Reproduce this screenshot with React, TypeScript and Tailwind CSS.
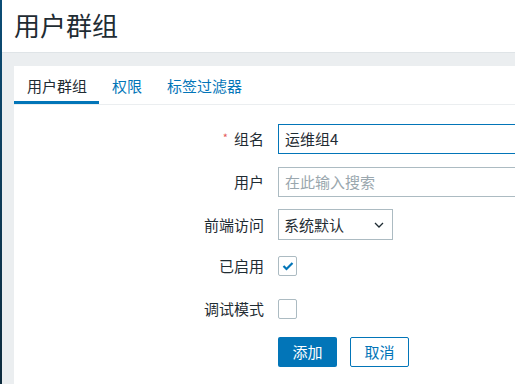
export default function App() {
  const font = { fontFamily: '"Noto Sans CJK SC", "Liberation Sans", sans-serif' }

  return (
    <div
      className="flex h-[384px] w-[515px] overflow-hidden bg-[#ebeef0] text-[#1f2c33]"
      style={font}
    >
      <div className="w-[2px] shrink-0 bg-gradient-to-b from-[#0b4d76] to-[#0d2b3d]" />

      <div className="flex min-w-0 flex-1 flex-col">
        <header className="flex h-[53px] shrink-0 items-center border-b border-[#dfe4e7] bg-white pl-[12px] pb-[2px]">
          <h1 className="text-[26px] leading-none text-[#1f2c33]">用户群组</h1>
        </header>

        <div className="flex-1 pt-[13px] pl-[12px]">
          <div className="h-full w-[600px] bg-white">
            <nav className="flex h-[39px] border-b border-[#ebeef0] text-[15px] leading-[20px]">
              <div className="relative pl-[13px] pr-[12px] pt-[10px] text-[#1f2c33]">
                用户群组
                <span className="absolute bottom-0 left-0 right-0 h-[3px] bg-[#0275b8]" />
              </div>
              <div className="pl-[13px] pr-[12px] pt-[10px] text-[#0275b8]">权限</div>
              <div className="pl-[13px] pr-[12px] pt-[10px] text-[#0275b8]">标签过滤器</div>
            </nav>

            <form className="flex flex-col pt-[19px] text-[15px] leading-[20px]">
              <div className="flex items-center">
                <label className="w-[251px] pr-[1px] text-right">
                  <span className="relative -top-[3px] mr-[6px] text-[11px] text-[#e45959]">*</span>
                  组名
                </label>
                <div className="ml-[13px] flex h-[30px] w-[300px] items-center border border-[#0275b8] pl-[6px]">
                  运维组4
                </div>
              </div>

              <div className="mt-[13px] flex items-center">
                <label className="w-[251px] pr-[1px] text-right">用户</label>
                <div className="ml-[13px] flex h-[30px] w-[300px] items-center border border-[#acbbc2] pl-[6px] text-[#9aa7ae]">
                  在此输入搜索
                </div>
              </div>

              <div className="mt-[12px] flex items-center">
                <label className="w-[251px] pr-[1px] text-right">前端访问</label>
                <div className="ml-[13px] flex h-[31px] w-[115px] items-center justify-between border border-[#acbbc2] pl-[5px] pr-[8px]">
                  <span>系统默认</span>
                  <svg width="10" height="6" viewBox="0 0 10 6" fill="none">
                    <path d="M1 1l4 4 4-4" stroke="#1f2c33" strokeWidth="1.3" />
                  </svg>
                </div>
              </div>

              <div className="mt-[16px] flex items-center">
                <label className="w-[251px] pr-[1px] text-right">已启用</label>
                <div className="ml-[13px] flex h-[20px] w-[19px] items-center justify-center rounded-[2px] border border-[#acbbc2]">
                  <svg width="12" height="10" viewBox="0 0 12 10" fill="none">
                    <path d="M1.5 5l3 3L10.5 2" stroke="#0275b8" strokeWidth="2.2" />
                  </svg>
                </div>
              </div>

              <div className="mt-[23px] flex items-center">
                <label className="w-[251px] pr-[1px] text-right">调试模式</label>
                <div className="ml-[13px] h-[20px] w-[19px] rounded-[2px] border border-[#acbbc2]" />
              </div>

              <div className="mt-[18px] flex gap-[13px] pl-[264px]">
                <button
                  type="button"
                  className="h-[30px] w-[59px] rounded-[2px] bg-[#0275b8] text-white"
                >
                  添加
                </button>
                <button
                  type="button"
                  className="h-[30px] w-[59px] rounded-[2px] border border-[#0275b8] bg-white text-[#0275b8]"
                >
                  取消
                </button>
              </div>
            </form>
          </div>
        </div>
      </div>
    </div>
  )
}
